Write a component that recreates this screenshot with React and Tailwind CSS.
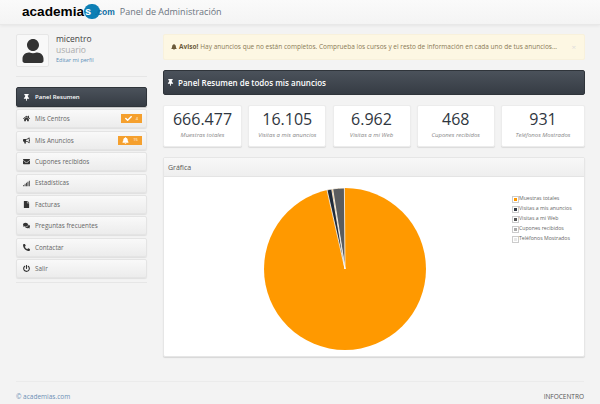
import React from 'react';
import { FaThumbtack, FaHome, FaBullhorn, FaEnvelope, FaSignal, FaFile, FaComments, FaPhoneAlt, FaPowerOff, FaBell, FaCheck, FaUser } from 'react-icons/fa';

const menu = [
  { label: 'Mis Centros', icon: FaHome, badge: { icon: FaCheck, n: '4', w: 'w-[21px]' } },
  { label: 'Mis Anuncios', icon: FaBullhorn, badge: { icon: FaBell, n: '15', w: 'w-[24px]' } },
  { label: 'Cupones recibidos', icon: FaEnvelope },
  { label: 'Estadísticas', icon: FaSignal },
  { label: 'Facturas', icon: FaFile },
  { label: 'Preguntas frecuentes', icon: FaComments },
  { label: 'Contactar', icon: FaPhoneAlt },
  { label: 'Salir', icon: FaPowerOff },
];

const stats = [
  ['666.477', 'Muestras totales', 'w-[79px]'],
  ['16.105', 'Visitas a mis anuncios', 'w-[78px]'],
  ['6.962', 'Visitas a mi Web', 'w-[78px]'],
  ['468', 'Cupones recibidos', 'w-[78px]'],
  ['931', 'Teléfonos Mostrados', 'w-[84px]'],
];

const legend = [
  ['Muestras totales', 'bg-[#ff9900]'],
  ['Visitas a mis anuncios', 'bg-[#333a44]'],
  ['Visitas a mi Web', 'bg-[#555555]'],
  ['Cupones recibidos', 'bg-[#aaaaaa]'],
  ['Teléfonos Mostrados', 'bg-[#e8e8e8]'],
];

const Pie = () => (
  <svg viewBox="0 0 170 170" width="170" height="170">
    <circle cx="85" cy="85" r="81" fill="#ff9900" />
    <path d="M85 85 L72.7 4.9 A81 81 0 0 1 84.4 4 Z" fill="#5a5c5e" stroke="#fff" strokeWidth="0.8" />
    <path d="M85 85 L67 6 A81 81 0 0 1 71.7 5.1 Z" fill="#1f2a38" stroke="#fff" strokeWidth="0.8" />
  </svg>
);

export default function App() {
  return (
    <div className="w-[600px] h-[404px] overflow-hidden bg-[#f3f3f3] font-['Open_Sans',sans-serif] text-[#555]">
      {/* header */}
      <div className="h-[25px] flex items-center pl-[22px] pb-[1px] bg-gradient-to-b from-[#fafafa] to-[#f4f4f4] border-b border-[#e8e8e8] shadow-[0_1px_3px_rgba(0,0,0,0.06)]">
        <div className="flex items-center font-['Liberation_Sans',sans-serif] font-bold text-black text-[13.6px] leading-none">
          academia
          <span className="w-[16px] h-[15px] rounded-full bg-[#0d7fb5] text-white text-[11px] flex items-center justify-start pl-[1px]">s</span>
          <span className="text-[#0d6fa5] text-[8.5px] -ml-[5px] mt-[2px]">.com</span>
        </div>
        <span className="ml-[5px] text-[9px] text-[#6b7480]">Panel de Administración</span>
      </div>

      <div className="flex pt-[9px] pl-[16px] h-[346px]">
        {/* sidebar */}
        <div className="w-[131px] shrink-0">
          <div className="flex gap-[7px] border-b border-[#e6e6e6] h-[43px]">
            <div className="w-[33px] h-[33px] bg-[#f8f8f8] border border-[#e6e6e6] rounded-[2px] flex items-center justify-center text-[#333]">
              <FaUser size={24} />
            </div>
            <div className="leading-none">
              <div className="text-[8.5px] text-[#444] mt-[1px]">micentro</div>
              <div className="text-[8.5px] text-[#aaa] mt-[2px]">usuario</div>
              <div className="text-[5.5px] text-[#5b8fb8] mt-[4px]">Editar mi perfil</div>
            </div>
          </div>

          <div className="mt-[10px] flex flex-col gap-[2.4px]">
            <div className="h-[20px] rounded-[2px] border border-[#2f343a] bg-gradient-to-b from-[#4b525b] to-[#363c44] flex items-center pl-[3px] text-white text-[6px] font-semibold shadow-[0_1px_1px_rgba(0,0,0,0.2)]">
              <span className="w-[12px] flex justify-center"><FaThumbtack size={7} /></span>
              <span className="ml-[3px]">Panel Resumen</span>
            </div>
            {menu.map(m => (
              <div key={m.label} className="h-[19px] rounded-[2px] border border-[#e4e4e4] bg-gradient-to-b from-[#f9f9f9] to-[#ececec] flex items-center pl-[3px] pr-[4px] text-[#666] text-[6.3px] shadow-[0_1px_1px_rgba(0,0,0,0.08)]">
                <span className="w-[12px] flex justify-center text-[#333]"><m.icon size={7} /></span>
                <span className="ml-[3px] flex-1">{m.label}</span>
                {m.badge && (
                  <span className={`${m.badge.w} h-[9px] bg-[#f5a02e] text-white flex items-center justify-center gap-[4px] text-[4px]`}>
                    <m.badge.icon size={7} />{m.badge.n}
                  </span>
                )}
              </div>
            ))}
            <div className="mt-[1px] border-t border-[#e6e6e6]" />
          </div>
        </div>

        {/* main */}
        <div className="w-[422px] ml-[16px]">
          <div className="h-[26px] bg-[#fdf7e3] border border-[#f8f1dc] rounded-[2px] flex items-center pl-[7px] pr-[8px] text-[6.5px] text-[#8a7a55]">
            <FaBell size={6} className="text-[#6b5a3a] mr-[2px]" />
            <span className="font-bold text-[#6b5a3a] mr-[2px]">Aviso!</span>
            <span className="flex-1 whitespace-nowrap">Hay anuncios que no están completos. Comprueba los cursos y el resto de información en cada uno de tus anuncios...</span>
            <span className="text-[#ddd] text-[8px]">×</span>
          </div>

          <div className="h-[25px] mt-[10px] rounded-[2px] border border-[#2f343a] bg-gradient-to-b from-[#4b525b] to-[#363c44] flex items-center pl-[3px] text-white text-[8px] font-semibold">
            <FaThumbtack size={7} />
            <span className="ml-[4px]">Panel Resumen de todos mis anuncios</span>
          </div>

          <div className="flex justify-between mt-[10px]">
            {stats.map(([n, l, w]) => (
              <div key={l} className={`${w} h-[42px] bg-white rounded-[2px] border border-[#ececec] shadow-[0_1px_1px_rgba(0,0,0,0.1)] text-center`}>
                <div className="text-[16px] leading-[22px] mt-[2px] text-[#2f3640]">{n}</div>
                <div className="text-[6px] italic text-[#888] leading-[8px] mt-[1px]">{l}</div>
              </div>
            ))}
          </div>

          <div className="mt-[10px] h-[200px] bg-white rounded-[2px] border border-[#e6e6e6] shadow-[0_1px_1px_rgba(0,0,0,0.12)] flex flex-col">
            <div className="h-[19px] shrink-0 bg-gradient-to-b from-[#f8f8f8] to-[#efefef] border-b border-[#e4e4e4] flex items-center pl-[4px] pt-[2px] text-[7px] text-[#555]">Gráfica</div>
            <div className="relative flex-1 flex items-center pl-[96px] pt-[4px]">
              <Pie />
              <div className="absolute left-[348px] top-[18px] flex flex-col gap-[2px]">
                {legend.map(([t, c]) => (
                  <div key={t} className="flex items-center h-[8px] text-[5.2px] leading-none text-[#666] whitespace-nowrap">
                    <span className="w-[7px] h-[7px] border border-[#ccc] p-[1px] flex"><span className={`flex-1 ${c}`} /></span>
                    {t}
                  </div>
                ))}
              </div>
            </div>
          </div>
        </div>
      </div>

      {/* footer */}
      <div className="mx-[16px] mt-[10px] pt-[12px] border-t border-[#ebebeb] flex justify-between text-[6.5px] leading-none">
        <span className="text-[#6b8fb5]">© academias.com</span>
        <span className="text-[#555]">INFOCENTRO</span>
      </div>
    </div>
  );
}
